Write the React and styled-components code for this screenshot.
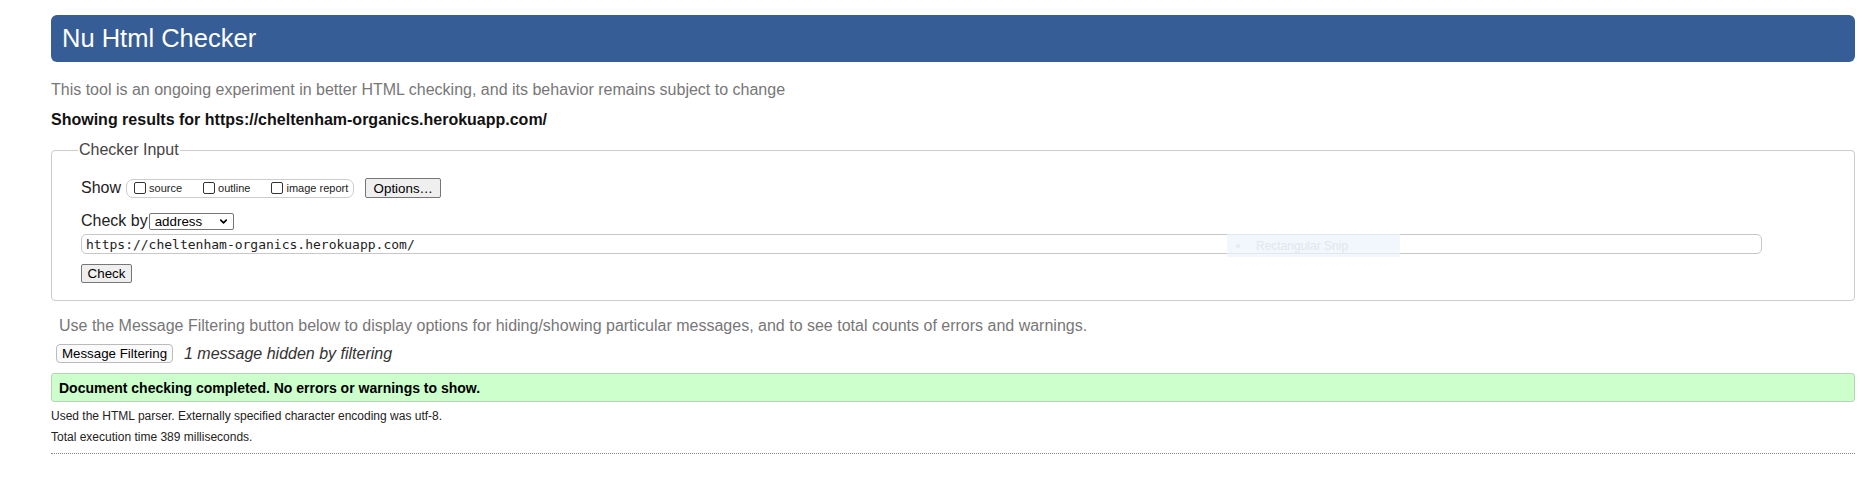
import React from 'react';
import styled, { createGlobalStyle } from 'styled-components';
import { ChevronDown } from 'lucide-react';

const GlobalStyle = createGlobalStyle`
  html, body {
    margin: 0;
    padding: 0;
    background: #fff;
  }
  body {
    font-family: "Liberation Sans", Arial, sans-serif;
    color: #000;
  }
`;

export const Page = styled.div`
  padding: 15px 20px 40px 51px;
  position: relative;
`;

export const Banner = styled.h1`
  margin: 0;
  height: 47px;
  padding: 0 11px;
  display: flex;
  align-items: center;
  background-color: #365d95;
  color: #fff;
  font-size: 25.5px;
  font-weight: normal;
  border-radius: 6px;
`;

export const Note = styled.p`
  margin: ${(props) => props.$margin || '0'};
  font-size: 16px;
  line-height: 20px;
  color: ${(props) => props.$color || '#777'};
  font-weight: ${(props) => (props.$bold ? 'bold' : 'normal')};
`;

export const Fieldset = styled.fieldset`
  margin: 10px 0 0 0;
  padding: 0 29px 17px 29px;
  border: 1px solid #ccc;
  border-radius: 4px;
  min-width: 0;
`;

export const Legend = styled.legend`
  margin-left: -3px;
  padding: 0 1px;
  font-size: 16px;
  line-height: 20px;
  color: #444;
`;

export const Row = styled.div`
  display: flex;
  align-items: center;
  height: ${(props) => props.$h || '20px'};
  margin-top: ${(props) => props.$mt || '0'};
`;

export const Label = styled.span`
  font-size: 16px;
  color: #222;
  margin-right: ${(props) => props.$mr || '0'};
`;

export const Group = styled.div`
  display: flex;
  align-items: center;
  gap: 21px;
  height: 17px;
  padding: 0 5px 0 7px;
  border: 1px solid #ccc;
  border-radius: 7px;
`;

export const Option = styled.label`
  display: flex;
  align-items: center;
  font-size: 11px;
  color: #222;
`;

export const Box = styled.input.attrs({ type: 'checkbox' })`
  appearance: none;
  width: 12px;
  height: 12px;
  margin: 0 3px 0 0;
  border: 1px solid #333;
  border-radius: 2px;
  background: #fff;
`;

export const Button = styled.button`
  height: ${(props) => props.$h || '20px'};
  width: ${(props) => props.$w || 'auto'};
  margin-left: ${(props) => props.$ml || '0'};
  padding: 0;
  font-family: "Liberation Sans", Arial, sans-serif;
  font-size: 13.33px;
  color: #000;
  background: ${(props) => (props.$soft ? '#fafafa' : '#efefef')};
  border: 1px solid ${(props) => (props.$soft ? '#bbb' : '#767676')};
  border-radius: ${(props) => (props.$soft ? '4px' : '2px')};
`;

export const SelectWrap = styled.span`
  position: relative;
  display: inline-flex;
  width: 85px;
  height: 17px;
  margin-left: 1px;
  svg {
    position: absolute;
    right: 5px;
    top: 3px;
    pointer-events: none;
  }
`;

export const Select = styled.select`
  appearance: none;
  width: 100%;
  height: 100%;
  padding: 0 0 0 5px;
  font-family: "Liberation Sans", Arial, sans-serif;
  font-size: 13.33px;
  color: #000;
  background: #fff;
  border: 1px solid #767676;
  border-radius: 2px;
`;

export const UrlField = styled.input`
  box-sizing: border-box;
  width: 1681px;
  height: 20px;
  margin-top: 4px;
  padding: 0 4px;
  display: block;
  font-family: "DejaVu Sans Mono", "Liberation Mono", monospace;
  font-size: 13px;
  color: #222;
  border: 1px solid #c8c8c8;
  border-radius: 5px;
`;

export const Snip = styled.div`
  position: absolute;
  left: 1227px;
  top: 234px;
  width: 173px;
  height: 23px;
  display: flex;
  align-items: center;
  gap: 16px;
  padding-left: 9px;
  box-sizing: border-box;
  background: rgba(235, 244, 252, 0.7);
  color: #e2e6eb;
  font-size: 12px;
  &::before {
    content: '';
    width: 4px;
    height: 4px;
    border-radius: 50%;
    background: #e6eaef;
  }
`;

export const Hidden = styled.em`
  margin-left: 11px;
  font-size: 16px;
  color: #333;
`;

export const Success = styled.div`
  margin-top: 10px;
  height: 27px;
  padding-left: 7px;
  display: flex;
  align-items: center;
  background: #ccffcc;
  border: 1px solid #b8d4b8;
  border-radius: 3px;
  font-size: 14px;
  font-weight: bold;
`;

export const Small = styled.p`
  margin: ${(props) => props.$margin || '0'};
  font-size: 12px;
  line-height: 21px;
  color: #222;
`;

export const Rule = styled.hr`
  margin: 5px 0 0 0;
  border: 0;
  border-top: 1px dotted #888;
`;

export default function App() {
  return (
    <>
      <GlobalStyle />
      <Page>
        <Banner>Nu Html Checker</Banner>
        <Note $margin="18px 0 0 0">
          This tool is an ongoing experiment in better HTML checking, and its behavior remains subject to change
        </Note>
        <Note $margin="10px 0 0 0" $color="#111" $bold>
          Showing results for https://cheltenham-organics.herokuapp.com/
        </Note>

        <Fieldset>
          <Legend>Checker Input</Legend>
          <Row $mt="18px">
            <Label $mr="5px">Show</Label>
            <Group>
              <Option><Box />source</Option>
              <Option><Box />outline</Option>
              <Option><Box />image report</Option>
            </Group>
            <Button $ml="11px" $w="76px">Options…</Button>
          </Row>
          <Row $mt="14px" $h="18px">
            <Label>Check by</Label>
            <SelectWrap>
              <Select defaultValue="address">
                <option value="address">address</option>
                <option value="file">file upload</option>
                <option value="text">text input</option>
              </Select>
              <ChevronDown size={11} strokeWidth={3.5} color="#000" />
            </SelectWrap>
          </Row>
          <UrlField readOnly value="https://cheltenham-organics.herokuapp.com/" />
          <Row $mt="10px" $h="19px">
            <Button $w="51px" $h="19px">Check</Button>
          </Row>
        </Fieldset>

        <Note $margin="15px 0 0 8px">
          Use the Message Filtering button below to display options for hiding/showing particular messages, and to see total counts of errors and warnings.
        </Note>
        <Row $mt="8px" $h="19px">
          <Button $soft $ml="5px" $w="117px" $h="19px">Message Filtering</Button>
          <Hidden>1 message hidden by filtering</Hidden>
        </Row>
        <Success>Document checking completed. No errors or warnings to show.</Success>
        <Small $margin="4px 0 0 0">Used the HTML parser. Externally specified character encoding was utf-8.</Small>
        <Small>Total execution time 389 milliseconds.</Small>
        <Rule />
        <Snip>Rectangular Snip</Snip>
      </Page>
    </>
  );
}
